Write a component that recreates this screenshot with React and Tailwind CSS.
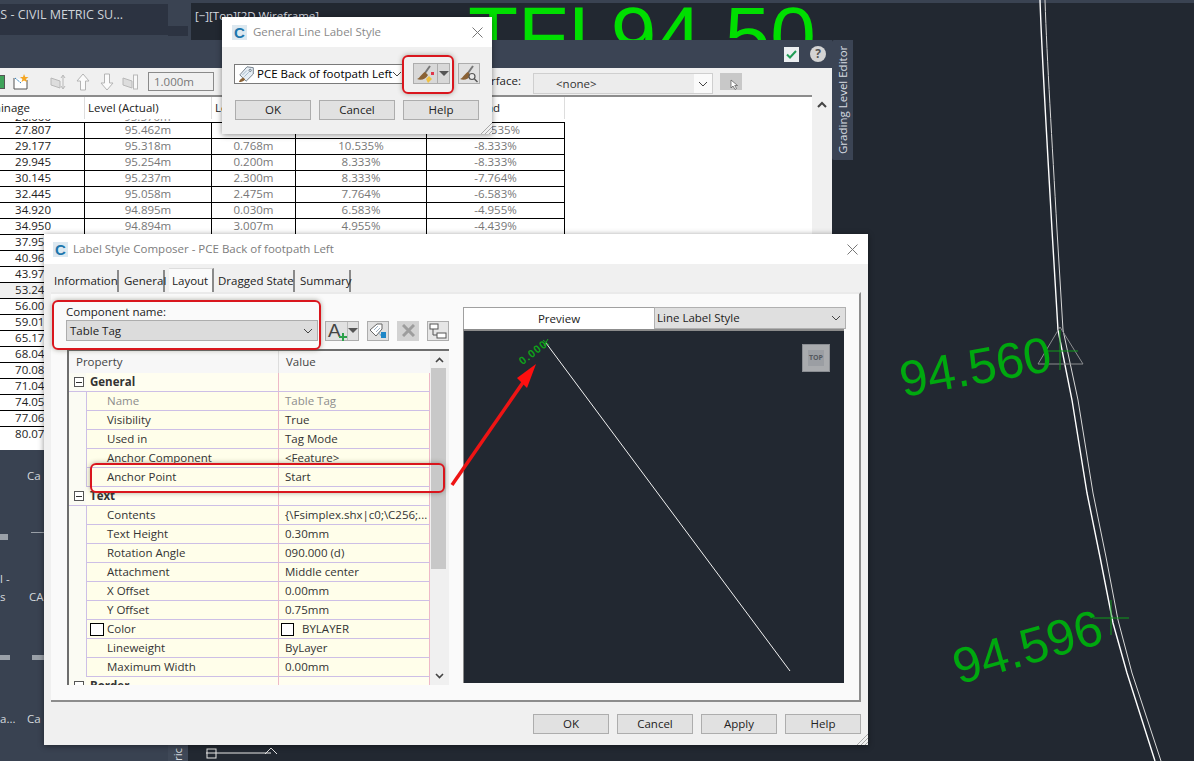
const gradeRows = [
  ['27.807', '95.462m', '3.070m', '10.535%', '-10.535%'],
  ['29.177', '95.318m', '0.768m', '10.535%', '-8.333%'],
  ['29.945', '95.254m', '0.200m', '8.333%', '-8.333%'],
  ['30.145', '95.237m', '2.300m', '8.333%', '-7.764%'],
  ['32.445', '95.058m', '2.475m', '7.764%', '-6.583%'],
  ['34.920', '94.895m', '0.030m', '6.583%', '-4.955%'],
  ['34.950', '94.894m', '3.007m', '4.955%', '-4.439%'],
  ['37.957'], ['40.964'], ['43.971'], ['53.240'], ['56.005'], ['59.012'], ['65.170'], ['68.040'], ['70.085'], ['71.040'], ['74.052'], ['77.060'], ['80.070'],
]

const props = [
  { section: 'General' },
  { name: 'Name', value: 'Table Tag', muted: true },
  { name: 'Visibility', value: 'True' },
  { name: 'Used in', value: 'Tag Mode' },
  { name: 'Anchor Component', value: '<Feature>' },
  { name: 'Anchor Point', value: 'Start' },
  { section: 'Text' },
  { name: 'Contents', value: '{\\Fsimplex.shx|c0;\\C256;...' },
  { name: 'Text Height', value: '0.30mm' },
  { name: 'Rotation Angle', value: '090.000 (d)' },
  { name: 'Attachment', value: 'Middle center' },
  { name: 'X Offset', value: '0.00mm' },
  { name: 'Y Offset', value: '0.75mm' },
  { name: 'Color', value: 'BYLAYER', swatch: true },
  { name: 'Lineweight', value: 'ByLayer' },
  { name: 'Maximum Width', value: '0.00mm' },
  { section: 'Border' },
]

function CLogo() {
  return (
    <div className="w-[15px] h-[15px] bg-[#dce8f0] flex items-center justify-center text-[15px] leading-none font-bold text-[#1c76ad] font-['Liberation_Sans',sans-serif]">
      C
    </div>
  )
}

function CloseX() {
  return (
    <svg width="11" height="11" viewBox="0 0 11 11" className="text-[#777]">
      <path d="M0.5 0.5L10.5 10.5M10.5 0.5L0.5 10.5" stroke="currentColor" fill="none" />
    </svg>
  )
}

function Grip() {
  return (
    <svg width="12" height="12" viewBox="0 0 12 12" className="absolute right-0 bottom-0">
      <path d="M12 1L1 12M12 5L5 12M12 9L9 12" stroke="#a8a8a8" fill="none" />
    </svg>
  )
}

function DialogButton({ children, className = '' }) {
  return (
    <button className={`w-[76px] h-[20px] border border-[#adadad] bg-[#e1e1e1] text-[11.5px] leading-none text-[#222] ${className}`}>
      {children}
    </button>
  )
}

function Chevron({ className = '' }) {
  return (
    <svg width="10" height="6" viewBox="0 0 10 6" className={`shrink-0 ${className}`}>
      <path d="M1 1L5 5L9 1" stroke="#444" fill="none" />
    </svg>
  )
}

function Brush({ star, lens }) {
  return (
    <svg width="20" height="18" viewBox="0 0 20 18">
      <path d="M9 8L14 1" stroke="#777" strokeWidth="2" />
      <path d="M1 14C4 13 6 8 9 7L12 10C10 14 5 16 1 14Z" fill="#8a6235" />
      {star && <path d="M10 14L13 11L16 14L12 18Z" fill="#f0c040" />}
      {star && <rect x="15" y="7" width="3" height="3" fill="#e0364a" />}
      {lens && <circle cx="13" cy="11.5" r="3" fill="#e8e8e8" stroke="#555" strokeWidth="1.2" />}
      {lens && <path d="M15.5 14L18.5 17" stroke="#555" strokeWidth="1.4" />}
    </svg>
  )
}

function TagIcon() {
  return (
    <svg width="20" height="18" viewBox="0 0 22 20" className="shrink-0">
      <path d="M3 11L11 2L18 3L18 10L10 18Z" fill="#e6eef5" stroke="#6a7682" />
      <circle cx="14.5" cy="6" r="1.3" fill="none" stroke="#6a7682" />
      <path d="M6 11L11 6M8 13L13 8" stroke="#9fb4c6" />
      <path d="M2 19C3 16 5 15 7 14L9 16C7 18 5 19 2 19Z" fill="#8a6235" />
    </svg>
  )
}

function GeneralLabelDialog() {
  return (
    <div className="absolute left-[222px] top-[17px] w-[270px] h-[117px] bg-[#f0f0f0] shadow-[0_1px_6px_rgba(0,0,0,0.45)]">
      <div className="h-[30px] bg-white flex items-center pl-[10px] pr-[9px]">
        <CLogo />
        <span className="ml-[6px] text-[11.5px] text-[#8a8a8a]">General Line Label Style</span>
        <span className="ml-auto flex"><CloseX /></span>
      </div>
      <div className="flex items-center pl-[12px] mt-[16px]">
        <div className="w-[170px] h-[20px] bg-white border border-[#7a7a7a] flex items-center pl-[2px] pr-[3px]">
          <TagIcon />
          <span className="text-[11.5px] leading-none text-black whitespace-nowrap">PCE Back of footpath Left</span>
          <Chevron className="ml-auto" />
        </div>
        <div className="ml-[9px] w-[37px] h-[21px] bg-[#d8d8d8] border border-[#adadad] flex items-center">
          <div className="w-[23px] flex justify-center"><Brush star /></div>
          <div className="flex-1 h-full border-l border-[#adadad] flex items-center justify-center">
            <div className="w-0 h-0 border-x-[5px] border-x-transparent border-t-[5px] border-t-[#555]" />
          </div>
        </div>
        <div className="ml-[8px] w-[22px] h-[21px] bg-[#e1e1e1] border border-[#adadad] flex items-center justify-center">
          <Brush lens />
        </div>
      </div>
      <div className="flex gap-[8px] pl-[13px] mt-[16px]">
        <DialogButton>OK</DialogButton>
        <DialogButton>Cancel</DialogButton>
        <DialogButton>Help</DialogButton>
      </div>
      <Grip />
    </div>
  )
}

function ToolArrow({ down }) {
  return (
    <svg width="16" height="18" viewBox="0 0 16 18" className={down ? 'rotate-180' : ''}>
      <path d="M8 1L14 8H10.5V17H5.5V8H2Z" fill="#fbfbfb" stroke="#b4b4b4" />
    </svg>
  )
}

function GradingPanel() {
  return (
    <div className="absolute left-0 top-[40px] w-[832px] h-[410px] flex flex-col bg-[#f0f0f0] overflow-hidden">
      <div className="h-[28px] shrink-0 bg-[#3b4454] flex items-center justify-end gap-[11px] pr-[6px]">
        <div className="w-[15px] h-[15px] bg-[#eceff1] flex items-center justify-center">
          <svg width="11" height="9" viewBox="0 0 11 9"><path d="M1 4.5L4 7.5L10 1" stroke="#1f9d55" strokeWidth="2" fill="none" /></svg>
        </div>
        <div className="w-[16px] h-[16px] rounded-full bg-[#d4d4d4] text-[#555] text-[12px] font-bold leading-none flex items-center justify-center">?</div>
      </div>
      <div className="h-[27px] shrink-0 flex items-center bg-[#f0f0f0]">
        <div className="w-[6px] h-[14px] bg-[#3fa35a] border border-[#555] ml-[-1px]" />
        <svg width="16" height="16" viewBox="0 0 16 16" className="ml-[8px]">
          <path d="M1 4V15H14V6" fill="#fff" stroke="#555" />
          <path d="M2 4L8 9" stroke="#2a7fc0" strokeDasharray="2 1" />
          <path d="M11 0L12.3 3H15.5L13 5L14 8L11 6.4L8.5 8L9.4 5L7 3H10Z" fill="#f5a623" />
        </svg>
        <svg width="16" height="16" viewBox="0 0 16 16" className="ml-[21px]">
          <path d="M1 4L10 7V14L1 11Z" fill="#ddd" stroke="#b8b8b8" />
          <path d="M13 2V14M11 4L13 1L15 4M11 12L13 15L15 12" stroke="#b8b8b8" fill="none" />
        </svg>
        <div className="ml-[9px] flex"><ToolArrow /></div>
        <div className="ml-[8px] flex"><ToolArrow down /></div>
        <svg width="17" height="16" viewBox="0 0 17 16" className="ml-[7px]">
          <path d="M1 4L10 7V14L1 11Z" fill="#ddd" stroke="#b8b8b8" />
          <rect x="11.5" y="1" width="4" height="14" fill="#f8f8f8" stroke="#b8b8b8" />
        </svg>
        <div className="ml-[9px] w-[66px] h-[19px] border border-[#8a8a8a] bg-[#f0f0f0] text-[11.5px] text-[#777] leading-none flex items-center pl-[5px]">1.000m</div>
        <span className="absolute left-[470px] top-[32px] text-[11.5px] text-[#222] w-[51px] text-right">Surface:</span>
        <div className="absolute left-[533px] top-[33px] w-[180px] h-[21px] border border-[#cfcfcf] bg-[#ececec] flex items-center pl-[22px] text-[11.5px] leading-none text-[#333]">
          &lt;none&gt;
          <div className="absolute right-0 top-0 w-[18px] h-full bg-[#fafafa] flex items-center justify-center"><Chevron /></div>
        </div>
        <div className="absolute left-[720px] top-[33px] w-[22px] h-[17px] bg-[#c8c8c8]">
          <svg width="9" height="11" viewBox="0 0 9 11" className="absolute right-[3px] bottom-0"><path d="M1 1V9L3 7L5 10.5L6.5 9.5L4.7 6.5H7.5Z" fill="#fff" stroke="#555" strokeWidth="0.7" /></svg>
        </div>
      </div>
      <div className="flex flex-1 min-h-0">
        <div className="w-[812px] bg-white border-t-2 border-[#8c8c8c] flex flex-col min-h-0">
          <div className="w-[565px] shrink-0 h-[22px] grid grid-cols-[84px_127px_84px_131px_139px] text-[11.5px] text-[#222] leading-[22px] whitespace-nowrap">
            <div className="overflow-hidden flex justify-end pr-[54px]">Chainage</div>
            <div className="border-l border-[#ddd] pl-[3px]">Level (Actual)</div>
            <div className="border-l border-[#ddd] pl-[3px]">Length</div>
            <div className="border-l border-[#ddd] pl-[3px]">Grade Behind</div>
            <div className="border-x border-[#ddd] pl-[3px]">Grade Ahead</div>
          </div>
          <div className="w-[565px] h-[3px] overflow-hidden text-[11.5px] leading-none text-[#888] text-center flex items-end">
            <span className="w-[84px] pr-[33px] text-right text-[#222]">26.000</span>
            <span className="w-[127px]">95.570m</span>
          </div>
          {gradeRows.map((r, i) => (
            <div key={r[0]} className={`w-[565px] shrink-0 h-[16px] grid grid-cols-[84px_127px_84px_131px_139px] border-t border-black text-[11.5px] leading-[14px] text-center text-[#777] ${i === 10 ? 'bg-[#f0f0f0]' : ''}`}>
              <div className="text-right pr-[33px] text-[#222]">{r[0]}</div>
              <div className="border-l border-black">{r[1]}</div>
              <div className="border-l border-black">{r[2]}</div>
              <div className="border-l border-black">{r[3]}</div>
              <div className="border-x border-black">{r[4]}</div>
            </div>
          ))}
        </div>
        <div className="flex-1 flex justify-center pt-[6px]">
          <svg width="10" height="7" viewBox="0 0 10 7"><path d="M1 6L5 2L9 6" stroke="#444" strokeWidth="2" fill="none" /></svg>
        </div>
      </div>
    </div>
  )
}

function PaletteStrip() {
  return (
    <div className="absolute left-0 top-[450px] w-[188px] h-[311px] bg-[#394251] text-[11.5px] text-[#d5d9de] overflow-hidden">
      <span className="absolute left-[27px] top-[17px]">Ca</span>
      <span className="absolute left-0 top-[84px] w-[8px] h-[6px] bg-[#9aa0a8]" />
      <span className="absolute left-[31px] top-[82px] w-[13px] h-[1px] bg-[#9aa0a8]" />
      <span className="absolute left-0 top-[120px]">l -</span>
      <span className="absolute left-0 top-[138px]">s</span>
      <span className="absolute left-[29px] top-[138px]">CA</span>
      <span className="absolute left-0 top-[205px] w-[10px] h-[5px] bg-[#9aa0a8]" />
      <span className="absolute left-[32px] top-[205px] w-[12px] h-[5px] bg-[#9aa0a8]" />
      <span className="absolute left-0 top-[260px]">a...</span>
      <span className="absolute left-[27px] top-[260px]">Ca</span>
      <span className="absolute left-[168px] top-[295px] w-[20px] h-[16px] bg-[#3f4857] [writing-mode:vertical-rl] rotate-180 leading-[20px]">ric</span>
    </div>
  )
}

function PropRow({ row }) {
  if (row.section) {
    return (
      <div className="h-[19px] shrink-0 flex border-b border-[#cdbfe6] bg-[#fffef0]">
        <div className="w-[17px] flex items-center pl-[5px] bg-[#fbfbf3]">
          <span className="w-[10px] h-[10px] border border-[#555] bg-white flex items-center justify-center"><span className="w-[6px] h-[1px] bg-[#333]" /></span>
        </div>
        <div className="w-[193px] pl-[4px] text-[11.5px] leading-[18px] font-bold text-[#333] border-r border-[#eeb9c8]">{row.section}</div>
        <div className="w-[151px] border-r border-[#eeb9c8]" />
      </div>
    )
  }
  const tone = row.muted ? 'text-[#8d8d8d]' : 'text-[#333]'
  return (
    <div className="h-[19px] shrink-0 flex">
      <div className="w-[17px] bg-[#fbfbf3]" />
      <div className="w-[193px] flex items-center border-l border-b border-r border-l-[#cdbfe6] border-b-[#cdbfe6] border-r-[#eeb9c8] bg-[#fffeea] pl-[3px]">
        <span className={`flex items-center justify-center w-[14px] h-[13px] ${row.swatch ? 'bg-white border border-black' : ''}`} />
        <span className={`ml-[3px] text-[11.5px] leading-none ${tone}`}>{row.name}</span>
      </div>
      <div className="w-[151px] flex items-center border-b border-r border-b-[#cdbfe6] border-r-[#eeb9c8] bg-[#fffeea] pl-[2px]">
        {row.swatch && <span className="w-[13px] h-[13px] bg-white border border-black mr-[8px]" />}
        <span className={`text-[11.5px] leading-none whitespace-nowrap ${row.swatch ? '' : 'ml-[4px]'} ${tone}`}>{row.value}</span>
      </div>
    </div>
  )
}

function ComposerDialog() {
  const tabs = [
    ['Information', 'w-[67px]'],
    ['General', 'ml-[3px] w-[43px]'],
    ['Layout', 'ml-[4px] w-[45px]'],
    ['Dragged State', 'ml-[2px] w-[79px]'],
    ['Summary', 'ml-[3px] w-[53px]'],
  ]
  return (
    <div className="absolute left-[44px] top-[234px] w-[824px] h-[511px] bg-[#f0f0f0] shadow-[0_1px_6px_rgba(0,0,0,0.45)] flex flex-col">
      <div className="h-[30px] shrink-0 bg-white flex items-center pl-[9px] pr-[10px]">
        <CLogo />
        <span className="ml-[5px] text-[11.5px] text-[#7d7d7d]">Label Style Composer - PCE Back of footpath Left</span>
        <span className="ml-auto flex"><CloseX /></span>
      </div>
      <div className="h-[28px] shrink-0 flex items-end pl-[8px] text-[11.5px] leading-none text-[#222]">
        {tabs.map(([t, w]) => (
          <div key={t} className={`${w} flex items-center pl-[2px] whitespace-nowrap border-r-2 border-[#8a8a8a] ${t === 'Layout' ? 'bg-[#fafafa] border-t border-t-[#ddd] h-[24px] pl-[3px]' : 'h-[22px]'}`}>{t}</div>
        ))}
      </div>
      <div className="ml-[7px] w-[810px] h-[410px] shrink-0 bg-[#fafafa] border-t-2 border-[#eaeaea] border-r-2 border-r-[#8c8c8c] border-b-2 border-b-[#8c8c8c] flex">
        <div className="w-[412px] shrink-0 pl-[15px] flex flex-col">
          <div className="pt-[10px] text-[11.5px] leading-[15px] text-[#222]">Component name:</div>
          <div className="flex items-center mt-[1px]">
            <div className="w-[252px] h-[21px] bg-[#dcdcdc] border border-[#adadad] flex items-center pl-[3px] pr-[4px] text-[11.5px] leading-none text-[#222]">
              Table Tag
              <Chevron className="ml-auto" />
            </div>
            <div className="ml-[7px] w-[34px] h-[20px] bg-[#e1e1e1] border border-[#adadad] flex items-center">
              <div className="w-[21px] relative text-[19px] leading-none text-[#444] pl-[2px] font-['Liberation_Sans',sans-serif]">
                A
                <svg width="8" height="8" viewBox="0 0 8 8" className="absolute right-0 bottom-[-1px]"><path d="M4 0V8M0 4H8" stroke="#2ca14a" strokeWidth="2" /></svg>
              </div>
              <div className="flex-1 h-full border-l border-[#bbb] flex items-center justify-center">
                <div className="w-0 h-0 border-x-[5px] border-x-transparent border-t-[5px] border-t-[#555]" />
              </div>
            </div>
            <div className="ml-[8px] w-[22px] h-[20px] bg-[#e1e1e1] border border-[#adadad] flex items-center justify-center">
              <svg width="18" height="16" viewBox="0 0 18 16">
                <path d="M1 7L8 1L13 1L13 6L7 13Z" fill="#fff" stroke="#666" />
                <path d="M5 7L9 3M7 9L11 5" stroke="#9fb4c6" />
                <path d="M9 9L12 12V9H17V15H12V13Z" fill="#1f87c7" />
              </svg>
            </div>
            <div className="ml-[8px] w-[22px] h-[20px] bg-[#d2d2d2] flex items-center justify-center">
              <svg width="13" height="13" viewBox="0 0 13 13"><path d="M1 1L12 12M12 1L1 12" stroke="#9d9d9d" strokeWidth="3" /></svg>
            </div>
            <div className="ml-[8px] w-[22px] h-[20px] bg-[#e6e6e6] border border-[#adadad] flex items-center justify-center">
              <svg width="18" height="16" viewBox="0 0 18 16"><rect x="1" y="1" width="8" height="5" fill="#fff" stroke="#555" /><rect x="8" y="10" width="9" height="5" fill="#fff" stroke="#555" /><path d="M4 6V12H8" stroke="#555" fill="none" /></svg>
            </div>
          </div>
          <div className="mt-[8px] w-[382px] h-[336px] ml-[1px] border-t-2 border-l-2 border-[#6e6e6e] flex overflow-hidden">
            <div className="w-[361px] shrink-0 flex flex-col overflow-hidden">
              <div className="h-[22px] shrink-0 flex bg-[#f7f7f7] text-[11.5px] leading-[22px] text-[#444]">
                <div className="w-[210px] pl-[7px] border-r border-[#ddd]">Property</div>
                <div className="pl-[7px]">Value</div>
              </div>
              {props.map(r => <PropRow key={r.section || r.name} row={r} />)}
            </div>
            <div className="flex-1 bg-[#f0f0f0] flex flex-col items-center relative">
              <svg width="9" height="6" viewBox="0 0 9 6" className="mt-[6px]"><path d="M1 5L4.5 1.5L8 5" stroke="#444" strokeWidth="1.6" fill="none" /></svg>
              <div className="w-[15px] h-[201px] bg-[#c8c8c8] mt-[5px] mr-[2px]" />
              <svg width="9" height="6" viewBox="0 0 9 6" className="absolute bottom-[6px]"><path d="M1 1L4.5 4.5L8 1" stroke="#444" strokeWidth="1.6" fill="none" /></svg>
            </div>
          </div>
        </div>
        <div className="w-[383px] shrink-0 flex flex-col pt-[13px]">
          <div className="flex h-[22px] shrink-0">
            <div className="w-[191px] border-t border-l border-[#a0a0a0] bg-white flex items-center justify-center text-[11.5px] leading-none text-[#222]">Preview</div>
            <div className="w-[192px] bg-[#dfdfdf] border border-[#b0b0b0] flex items-center pl-[2px] pr-[4px] text-[11.5px] leading-none text-[#222]">
              Line Label Style
              <Chevron className="ml-auto" />
            </div>
          </div>
          <div className="w-[381px] h-[354px] shrink-0 bg-[#222831] border-t-2 border-l border-[#8c8c8c] relative">
            <div className="absolute left-[338px] top-[13px] w-[28px] h-[28px] bg-[#a9abae] border border-[#8a8d92] flex items-center justify-center">
              <span className="w-[16px] h-[16px] bg-[#9b9ea3] text-[7px] font-bold leading-[16px] text-center text-[#55595f]">TOP</span>
            </div>
            <span className="absolute left-[53px] top-[16px] text-[11px] font-bold leading-none tracking-[1px] text-[#0fa01a] -rotate-[38deg] font-['Liberation_Sans',sans-serif]">0.000</span>
            <svg width="381" height="354" viewBox="0 0 381 354" className="absolute left-0 top-0">
              <path d="M82 12L326 340" stroke="#f2f2f2" fill="none" />
              <path d="M79 9L85 14M84 8L80 15" stroke="#18a81f" fill="none" />
            </svg>
          </div>
        </div>
      </div>
      <div className="flex justify-end gap-[8px] pr-[7px] mt-[12px]">
        <DialogButton>OK</DialogButton>
        <DialogButton>Cancel</DialogButton>
        <DialogButton>Apply</DialogButton>
        <DialogButton>Help</DialogButton>
      </div>
      <Grip />
    </div>
  )
}

export default function App() {
  return (
    <div className="relative w-[1194px] h-[761px] overflow-hidden bg-[#222831] font-['Open_Sans',sans-serif]">
      {/* top band + file tab */}
      <div className="absolute left-0 top-0 w-[191px] h-[40px] bg-[#3a4352]">
        <div className="h-[31px] w-[168px] mt-[4px] bg-[#2c3341] text-[12.5px] leading-[22px] text-[#cfd3d9] flex justify-end pr-[45px] overflow-hidden whitespace-nowrap">TES - CIVIL METRIC SU...</div>
        <div className="absolute left-[168px] top-[26px] w-[20px] h-[10px] bg-[#2c3341]" />
      </div>
      <div className="absolute left-[191px] top-0 w-[1003px] h-[3px] bg-[#3a4352]" />
      <span className="absolute left-[195px] top-[8px] text-[11.5px] leading-[15px] text-[#d8dbe0] whitespace-nowrap">[−][Top][2D Wireframe]</span>
      <span className="absolute left-[468px] top-[-5px] text-[82px] leading-none text-[#00df00] whitespace-nowrap [word-spacing:-0.278em] font-['Liberation_Sans',sans-serif]">TFL 94.50</span>

      {/* model space linework */}
      <svg width="1194" height="761" viewBox="0 0 1194 761" className="absolute left-0 top-0">
        <path d="M1040 0C1042 60 1047 140 1052 230L1058 330L1072 400L1087 493L1100 557L1113 623L1127 673L1155 761" stroke="#fff" strokeWidth="1.4" fill="none" />
        <path d="M1045 0C1047 60 1052 140 1057 230L1063 330L1078 400L1093 493L1106 557L1118 620L1132 673L1161 761" stroke="#d8d8d8" fill="none" />
        <path d="M1060 327L1038 364H1083Z" stroke="#8b8d90" fill="none" />
        <path d="M1046 351H1078M1060 330V370M1093 618H1129M1111 600V635" stroke="#0f9a1a" fill="none" />
        <path d="M206 753H271M271 748L265 754M271 748L277 754" stroke="#e6e6e6" fill="none" />
        <rect x="207" y="749" width="9" height="9" stroke="#e6e6e6" fill="none" />
      </svg>
      <span className="absolute left-[899px] top-[342px] text-[50px] leading-none text-[#00a80f] -rotate-[10deg] whitespace-nowrap font-['Liberation_Sans',sans-serif]">94.560</span>
      <span className="absolute left-[951px] top-[622px] text-[50px] leading-none text-[#00a80f] -rotate-[16deg] whitespace-nowrap font-['Liberation_Sans',sans-serif]">94.596</span>

      <GradingPanel />
      <div className="absolute left-[832px] top-[40px] w-[21px] h-[120px] bg-[#3b4454] rounded-r-[2px] text-[11.5px] leading-[21px] text-[#d8dce2] flex items-center justify-center [writing-mode:vertical-rl] rotate-180">Grading Level Editor</div>
      <PaletteStrip />
      <GeneralLabelDialog />
      <ComposerDialog />

      {/* red callouts */}
      <div className="absolute left-[402px] top-[55px] w-[52px] h-[39px] rounded-[6px] border-2 border-[#d9161d] shadow-[0_0_5px_rgba(70,70,50,0.45)]" />
      <div className="absolute left-[52px] top-[300px] w-[269px] h-[50px] rounded-[6px] border-2 border-[#d9161d] shadow-[0_0_5px_rgba(70,70,50,0.45)]" />
      <div className="absolute left-[90px] top-[463px] w-[355px] h-[30px] rounded-[6px] border-2 border-[#d9161d] shadow-[0_0_5px_rgba(70,70,50,0.45)]" />
      <svg width="1194" height="761" viewBox="0 0 1194 761" className="absolute left-0 top-0 pointer-events-none">
        <path d="M452 485L524 381" stroke="#ee1414" strokeWidth="3.5" fill="none" />
        <path d="M536 364L517 378L527 388Z" fill="#ff0f0f" />
      </svg>
    </div>
  )
}
